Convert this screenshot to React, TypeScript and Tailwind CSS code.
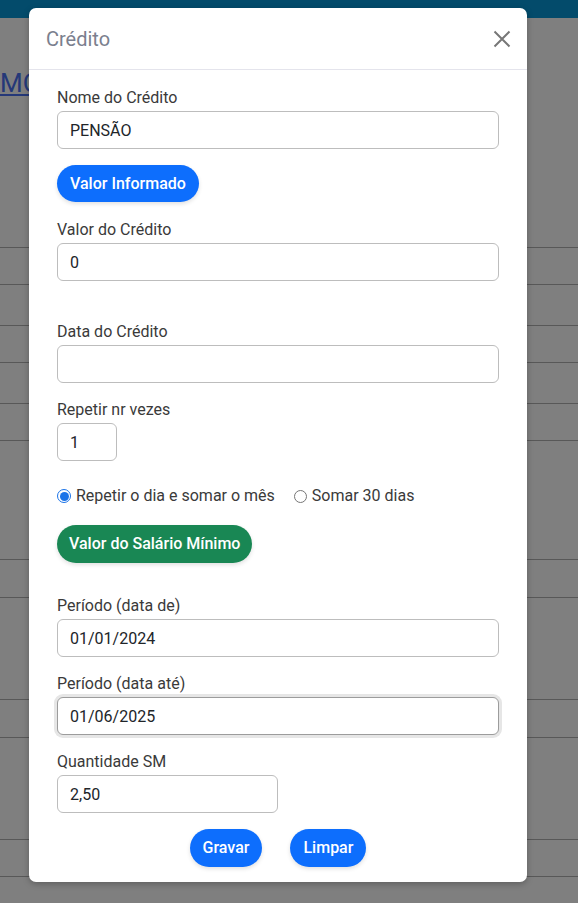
import React from 'react';

const ROWS = [247, 284, 325, 362, 403, 440, 559, 597, 699, 737, 839, 876];

const Label = ({ children, className = '' }: { children: React.ReactNode; className?: string }) => (
  <label className={`block text-[16px] leading-6 text-[#3a3a3a] ${className}`}>{children}</label>
);

const Field = ({ value, className = 'w-full', focus = false }: { value: string; className?: string; focus?: boolean }) => (
  <input
    readOnly
    value={value}
    className={`${className} mt-px h-[38px] rounded-[6px] border bg-white px-3 text-[16px] text-[#212529] outline-none ${
      focus ? 'border-[#9c9c9c] shadow-[0_0_0_3px_#e6e6e6]' : 'border-[#bdbdbd]'
    }`}
  />
);

const Radio = ({ checked, label }: { checked?: boolean; label: string }) => (
  <span className="flex items-center">
    {checked ? (
      <span className="flex h-[14px] w-[14px] items-center justify-center rounded-full border border-[#1a73e8] bg-white">
        <span className="h-[9px] w-[9px] rounded-full bg-[#1a73e8]" />
      </span>
    ) : (
      <span className="h-[13px] w-[13px] rounded-full border border-[#767676] bg-white" />
    )}
    <span className="ml-[5px] text-[16px] leading-6 text-[#3a3a3a]">{label}</span>
  </span>
);

const PillButton = ({ children, className = 'bg-[#0d6efd]' }: { children: React.ReactNode; className?: string }) => (
  <button className={`${className} h-[38px] rounded-full px-[12px] text-[16px] font-medium text-white shadow-[0_2px_4px_rgba(0,0,0,0.12)]`}>
    {children}
  </button>
);

export default function App() {
  return (
    <div className="relative h-[903px] w-[578px] overflow-hidden bg-white" style={{ fontFamily: 'Roboto, "Noto Sans", sans-serif' }}>
      {/* page under the modal */}
      <div className="h-[18px] bg-[#0696d6]" />
      <div className="mt-[50px]">
        <a className="text-[26px] leading-[30px] text-[#4a70f0] underline">MO</a>
      </div>
      {ROWS.map((y) => (
        <div key={y} className="absolute left-0 right-0 h-px bg-[#b0b0b0]" style={{ top: y }} />
      ))}

      {/* overlay */}
      <div className="absolute inset-0 bg-black/50">
        <div className="ml-[29px] mt-[8px] w-[498px] rounded-[7px] bg-white shadow-[0_2px_6px_rgba(0,0,0,0.25)]">
          <div className="flex h-[62px] items-center justify-between border-b border-[#e4e4ec] pl-[17px] pr-[14px]">
            <h5 className="text-[20px] text-[#7b7f8e]">Crédito</h5>
            <svg width="20" height="20" viewBox="0 0 20 20" className="mr-px">
              <path d="M2.5 2.5 L17.5 17.5 M17.5 2.5 L2.5 17.5" stroke="#777" strokeWidth="2" />
            </svg>
          </div>

          <div className="px-[28px] pb-[15px] pt-[16px]">
            <Label>Nome do Crédito</Label>
            <Field value="PENSÃO" />

            <div className="mt-[16px]">
              <PillButton className="bg-[#0d6efd] !h-[37px] !px-[13px]">Valor Informado</PillButton>
            </div>

            <Label className="mt-[16px]">Valor do Crédito</Label>
            <Field value="0" />

            <Label className="mt-[39px]">Data do Crédito</Label>
            <Field value="" />

            <Label className="mt-[15px]">Repetir nr vezes</Label>
            <Field value="1" className="w-[60px]" />

            <div className="mt-[23px] flex items-center gap-[19px]">
              <Radio checked label="Repetir o dia e somar o mês" />
              <Radio label="Somar 30 dias" />
            </div>

            <div className="mt-[17px]">
              <PillButton className="bg-[#198754]">Valor do Salário Mínimo</PillButton>
            </div>

            <Label className="mt-[31px]">Período (data de)</Label>
            <Field value="01/01/2024" />

            <Label className="mt-[15px]">Período (data até)</Label>
            <Field value="01/06/2025" focus />

            <Label className="mt-[15px]">Quantidade SM</Label>
            <Field value="2,50" className="w-[221px]" />

            <div className="mt-[16px] flex justify-center gap-[28px]">
              <PillButton className="bg-[#0d6efd] !px-[13px]">Gravar</PillButton>
              <PillButton className="bg-[#0d6efd] !px-[13px]">Limpar</PillButton>
            </div>
          </div>
        </div>
      </div>
    </div>
  );
}
